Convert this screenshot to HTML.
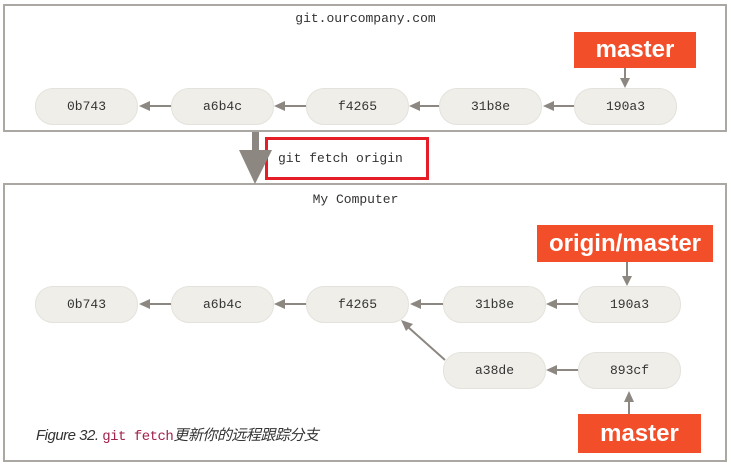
<!DOCTYPE html>
<html><head><meta charset="utf-8"><style>
body{margin:0;width:731px;height:467px;background:#fff;position:relative;overflow:hidden;font-family:"Liberation Mono",monospace}
.box{position:absolute;border:2px solid #aba7a2;box-sizing:border-box;background:#fff}
.t{position:absolute;font-size:13px;color:#333;text-align:center}
.p{position:absolute;width:103px;height:37px;border-radius:18px;background:#efeee9;border:1px solid #e4e2dc;box-sizing:border-box;font-size:13px;color:#333;text-align:center;line-height:35px}
.lab{position:absolute;background:#f24e2a;color:#fff;font-family:"Liberation Sans",sans-serif;font-weight:bold;font-size:24px;text-align:center}
svg{position:absolute;left:0;top:0}
</style></head><body>
<div class="box" style="left:3px;top:4px;width:724px;height:128px"></div>
<div class="box" style="left:3px;top:183px;width:724px;height:279px"></div>
<div class="t" style="left:0;width:731px;top:11px">git.ourcompany.com</div>
<div class="t" style="left:0;width:711px;top:192px">My Computer</div>
<div class="lab" style="left:574px;top:32px;width:122px;height:36px;line-height:36px">master</div>
<div class="p" style="left:35px;top:88px">0b743</div>
<div class="p" style="left:171px;top:88px">a6b4c</div>
<div class="p" style="left:306px;top:88px">f4265</div>
<div class="p" style="left:439px;top:88px">31b8e</div>
<div class="p" style="left:574px;top:88px">190a3</div>
<div style="position:absolute;left:265px;top:137px;width:164px;height:43px;border:3px solid #e51d26;box-sizing:border-box;background:#fff;font-size:13px;line-height:37px;color:#333;padding-left:10px">git fetch origin</div>
<div class="lab" style="left:537px;top:225px;width:176px;height:37px;line-height:37px">origin/master</div>
<div class="p" style="left:35px;top:286px">0b743</div>
<div class="p" style="left:171px;top:286px">a6b4c</div>
<div class="p" style="left:306px;top:286px">f4265</div>
<div class="p" style="left:443px;top:286px">31b8e</div>
<div class="p" style="left:578px;top:286px">190a3</div>
<div class="p" style="left:443px;top:352px">a38de</div>
<div class="p" style="left:578px;top:352px">893cf</div>
<div class="lab" style="left:578px;top:414px;width:123px;height:39px;line-height:39px">master</div>
<div style="position:absolute;left:36px;top:424px;font-size:15px;color:#333;font-family:'Liberation Sans','Noto Sans CJK SC',sans-serif;font-style:italic;letter-spacing:-0.5px">Figure 32. <span style="font-family:'Liberation Mono',monospace;font-style:normal;color:#a0234b;font-size:14px">git fetch</span>更新你的远程跟踪分支</div>
<svg width="731" height="467" fill="#8c8781" stroke="#8c8781">
<g stroke-width="2">
<line x1="171" y1="106" x2="148" y2="106"/><polygon points="139,106 150,101 150,111" stroke="none"/>
<line x1="306" y1="106" x2="283" y2="106"/><polygon points="274,106 285,101 285,111" stroke="none"/>
<line x1="439" y1="106" x2="418" y2="106"/><polygon points="409,106 420,101 420,111" stroke="none"/>
<line x1="574" y1="106" x2="552" y2="106"/><polygon points="543,106 554,101 554,111" stroke="none"/>
<line x1="625" y1="68" x2="625" y2="80"/><polygon points="625,88 620,78 630,78" stroke="none"/>
<line x1="171" y1="304" x2="148" y2="304"/><polygon points="139,304 150,299 150,309" stroke="none"/>
<line x1="306" y1="304" x2="283" y2="304"/><polygon points="274,304 285,299 285,309" stroke="none"/>
<line x1="443" y1="304" x2="420" y2="304"/><polygon points="410,304 421,299 421,309" stroke="none"/>
<line x1="578" y1="304" x2="556" y2="304"/><polygon points="546,304 557,299 557,309" stroke="none"/>
<line x1="578" y1="370" x2="556" y2="370"/><polygon points="546,370 557,365 557,375" stroke="none"/>
<line x1="627" y1="262" x2="627" y2="278"/><polygon points="627,286 622,276 632,276" stroke="none"/>
<line x1="629" y1="414" x2="629" y2="400"/><polygon points="629,391 624,402 634,402" stroke="none"/>
<line x1="445" y1="360" x2="408" y2="327"/><polygon points="401,320 413,324 406,331" stroke="none"/>
</g>
<rect x="252" y="132" width="7" height="20" stroke="none"/>
<polygon points="239,150 272,150 255,184" stroke="none"/>
</svg>
</body></html>
